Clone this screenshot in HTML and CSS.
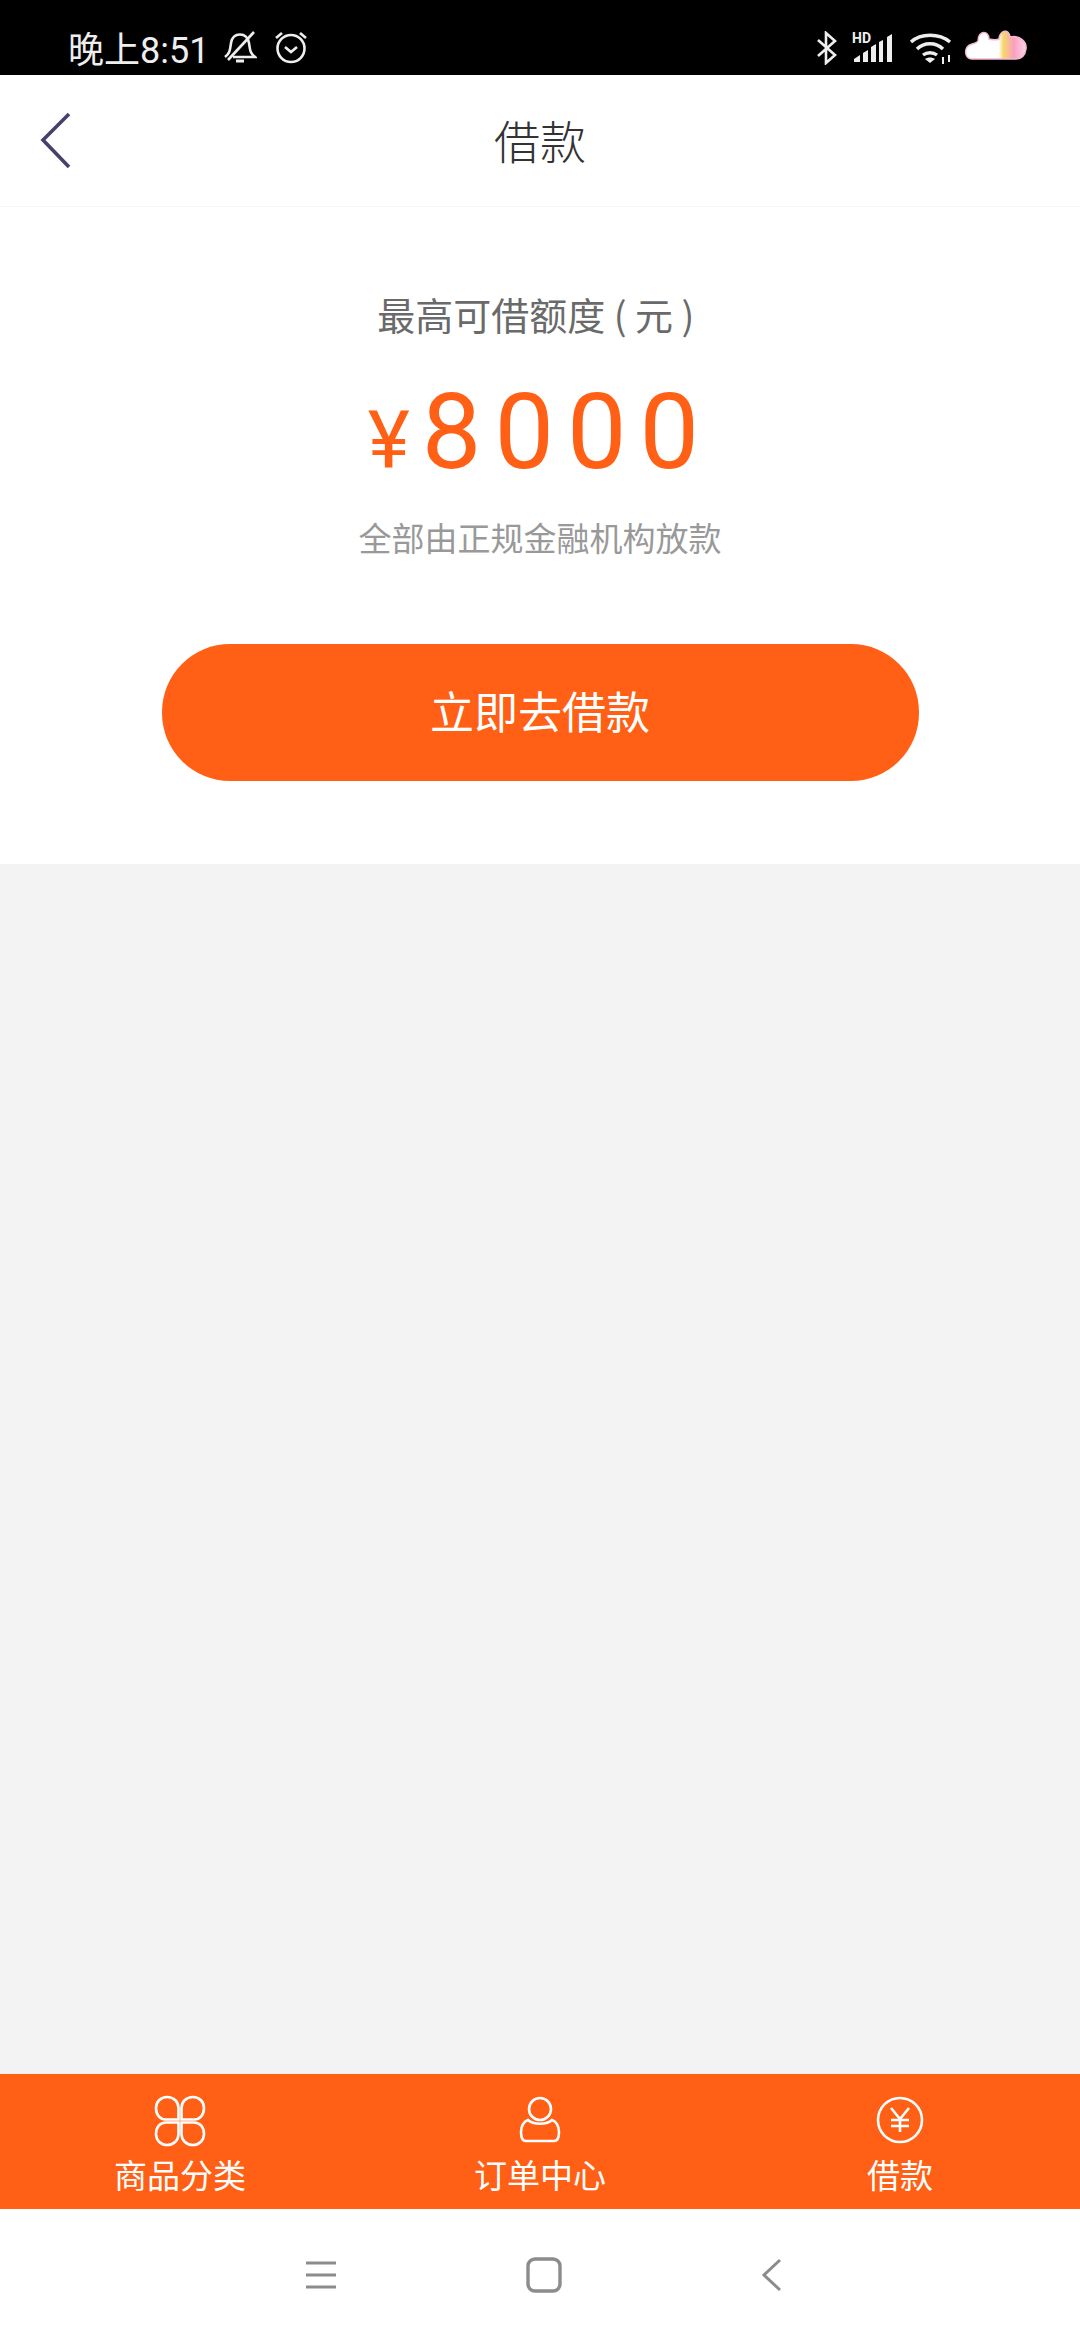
FILE: index.html
```html
<!DOCTYPE html>
<html>
<head>
    <title>借款</title>
    <link rel="stylesheet" href="styles.css">
</head>
<body>
    <div class="phone">
        <!-- Status bar -->
        <div class="status-bar">
            <div class="status-left">
                <span class="status-time">晚上8:51</span>
                <svg class="status-bell" viewBox="0 0 34 34" fill="none" stroke="#eee" stroke-width="2.6">
                    <path d="M2 27 C7 23 7 20 8 13 C9 7 13 4.500 17 4.500 C22 4.500 25 8 26 13 C27 20 27 23 32 27 L10 27"/>
                    <path d="M5 30 L31 2"/>
                    <path d="M13 31 H21" stroke-width="3"/>
                </svg>
                <svg class="status-alarm" viewBox="0 0 34 34" fill="none" stroke="#eee" stroke-width="2.6">
                    <circle cx="17" cy="18.500" r="13.500"/>
                    <path d="M11 17 L17 22 L23 17"/>
                    <path d="M2 8 L8 3"/>
                    <path d="M32 8 L26 3"/>
                </svg>
            </div>
            <div class="status-right">
                <svg class="status-bt" viewBox="0 0 22 34" fill="none" stroke="#eee" stroke-width="2.600">
                    <path d="M2 9 L19 24 L10 32 V2 L19 10 L2 25"/>
                </svg>
                <svg class="status-signal" viewBox="0 0 42 32">
                    <text x="0" y="11" class="status-hd">HD</text>
                    <path fill="#eee" d="M2 27 L8 23 V30 H2Z M11 21 L16 18 V30 H11Z M19 15 L24 12 V30 H19Z M27 10 L31 8 V30 H27Z M35 5 L40 2 V30 H35Z"/>
                </svg>
                <svg class="status-wifi" viewBox="0 0 44 32" fill="none" stroke="#eee" stroke-width="3.400">
                    <path d="M2 10 C12 1 30 1 41 10"/>
                    <path d="M8 17 C15 10 27 10 34 17"/>
                    <path d="M14 23 C18 20 24 20 28 23"/>
                    <path d="M16 27 L21 31 L26 27 C23 25 19 25 16 27Z" fill="#eee" stroke="none"/>
                    <path d="M34 25 V32 M40 23 V30" stroke-width="2"/>
                </svg>
                <svg class="status-cloud" viewBox="0 0 66 34">
                    <defs>
                        <linearGradient id="cloudFill" x1="0" y1="0" x2="1" y2="0">
                            <stop offset="0.55" stop-color="#fff"/>
                            <stop offset="0.62" stop-color="#f7d86a"/>
                            <stop offset="0.8" stop-color="#f8a0c0"/>
                            <stop offset="1" stop-color="#fbd4ea"/>
                        </linearGradient>
                    </defs>
                    <path fill="url(#cloudFill)" stroke="#f6b8d2" stroke-width="1.500" d="M10 32 C2 32 1 19 10 17 C13 16 15 16 16 14 C16 3 27 3 27 12 C31 13 35 13 37 12 C38 3 47 1 48 10 C58 8 65 15 64 22 C63 29 59 32 54 32Z"/>
                </svg>
            </div>
        </div>

        <!-- Title -->
        <header class="title-bar">
            <svg class="back-icon" viewBox="0 0 32 58" fill="none" stroke="#46406f" stroke-width="3.600">
                <path d="M29 2 L3 28 L29 55"/>
            </svg>
            <h1 class="page-title">借款</h1>
        </header>

        <!-- Loan amount -->
        <section class="loan-card">
            <p class="loan-label">最高可借额度 ( 元 ) </p>
            <p class="loan-amount"><span class="loan-currency">¥</span>8000</p>
            <p class="loan-note">全部由正规金融机构放款</p>
            <button class="loan-button">立即去借款</button>
        </section>

        <div class="spacer"></div>

        <!-- Tabs -->
        <nav class="tab-bar">
            <div class="tab-item">
                <svg class="tab-icon" viewBox="0 0 52 52" fill="none" stroke="#fff" stroke-width="2.600">
                    <path d="M24.500 24.500 H12 C6 24.500 2 20 2 13 C2 7 6.500 2 13 2 C20 2 24.500 7 24.500 13Z"/>
                    <path d="M27.500 24.500 H40 C46 24.500 50 20 50 13 C50 7 45.500 2 39 2 C32 2 27.500 7 27.500 13Z"/>
                    <path d="M24.500 27.500 H12 C6 27.500 2 32 2 39 C2 45 6.500 50 13 50 C20 50 24.500 45 24.500 39Z"/>
                    <path d="M27.500 27.500 H40 C46 27.500 50 32 50 39 C50 45 45.500 50 39 50 C32 50 27.500 45 27.500 39Z"/>
                </svg>
                <span class="tab-label">商品分类</span>
            </div>
            <div class="tab-item">
                <svg class="tab-icon" viewBox="0 0 52 52" fill="none" stroke="#fff" stroke-width="2.600">
                    <circle cx="26" cy="14" r="11"/>
                    <path d="M14 25 C19 30 33 30 38 25 C42 26 45 31 45 37 C45 42 44 46 40 46 H12 C8 46 7 42 7 37 C7 31 10 26 14 25Z"/>
                </svg>
                <span class="tab-label">订单中心</span>
            </div>
            <div class="tab-item">
                <svg class="tab-icon" viewBox="0 0 52 52" fill="none" stroke="#fff" stroke-width="2.600">
                    <circle cx="26" cy="25" r="22"/>
                    <path d="M17 13 L26 24 L35 13 M17 25 H35 M17 31 H35 M26 24 V37"/>
                </svg>
                <span class="tab-label">借款</span>
            </div>
        </nav>

        <!-- System navigation -->
        <div class="system-nav">
            <svg class="nav-menu" viewBox="0 0 32 30" fill="none" stroke="#8c8c8c" stroke-width="3">
                <path d="M1 3 H31 M1 15 H31 M1 27 H31"/>
            </svg>
            <svg class="nav-home" viewBox="0 0 36 36" fill="none" stroke="#8c8c8c" stroke-width="3.400">
                <rect x="2" y="2" width="32" height="32" rx="7"/>
            </svg>
            <svg class="nav-back" viewBox="0 0 20 34" fill="none" stroke="#8c8c8c" stroke-width="3">
                <path d="M18 2 L2 17 L18 32"/>
            </svg>
        </div>
    </div>
</body>
</html>
```

FILE: styles.css
```css
* {
    box-sizing: border-box;
}

body {
    margin: 0;
    padding: 0;
    font-family: "Noto Sans CJK SC", "Noto Sans", sans-serif;
    background-color: #f3f3f3;
}

.phone {
    width: 1080px;
    height: 2340px;
    display: flex;
    flex-direction: column;
    overflow: hidden;
}

.status-bar {
    height: 75px;
    background: #000;
    color: #eee;
    display: flex;
    justify-content: space-between;
    align-items: flex-end;
    padding: 0 52px 2px 68px;
}

.status-left,
.status-right {
    display: flex;
    align-items: center;
}

.status-right {
    margin-bottom: 4px;
}

.status-time {
    font-family: Roboto, "Noto Sans CJK SC", sans-serif;
    font-size: 36px;
    line-height: 44px;
}

.status-bell {
    width: 34px;
    height: 34px;
    margin-left: 14px;
    margin-bottom: 8px;
}

.status-alarm {
    width: 34px;
    height: 34px;
    margin-left: 17px;
    margin-bottom: 8px;
}

.status-bt {
    width: 22px;
    height: 34px;
}

.status-signal {
    width: 42px;
    height: 32px;
    margin-left: 14px;
    overflow: visible;
}

.status-hd {
    font-family: Roboto, sans-serif;
    font-size: 14px;
    font-weight: 700;
    fill: #eee;
}

.status-wifi {
    width: 46px;
    height: 32px;
    margin-left: 14px;
}

.status-cloud {
    width: 66px;
    height: 34px;
    margin-left: 8px;
    margin-bottom: 8px;
}

.title-bar {
    height: 132px;
    background: #fff;
    border-bottom: 1px solid #f5f5f5;
    display: flex;
    align-items: center;
    justify-content: center;
    position: relative;
}

.back-icon {
    position: absolute;
    left: 40px;
    top: 37px;
    width: 32px;
    height: 58px;
}

.page-title {
    margin: 0 0 4px;
    font-size: 46px;
    font-weight: 300;
    color: #333;
}

.loan-card {
    height: 657px;
    background: #fff;
    display: flex;
    flex-direction: column;
    align-items: center;
    padding-top: 81px;
}

.loan-card p {
    margin: 0;
}

.loan-label {
    font-size: 38px;
    line-height: 52px;
    color: #6a6a6a;
    white-space: pre;
}

.loan-amount {
    margin-top: 30px !important;
    font-family: Roboto, sans-serif;
    font-size: 106px;
    line-height: 124px;
    letter-spacing: 13px;
    color: #ff6015;
}

.loan-currency {
    font-size: 80px;
    margin-right: 12px;
    letter-spacing: 0;
}

.loan-note {
    margin-top: 11px !important;
    font-size: 33px;
    line-height: 46px;
    color: #999;
}

.loan-button {
    margin-top: 84px;
    width: 757px;
    height: 137px;
    padding: 0 0 6px;
    border: 0;
    border-radius: 68px;
    background-color: #ff6015;
    color: #fff;
    font-family: inherit;
    font-size: 44px;
}

.spacer {
    flex: 1;
}

.tab-bar {
    height: 135px;
    background: #ff6015;
    display: flex;
    align-items: flex-start;
    padding-top: 21px;
}

.tab-item {
    flex: 1;
    display: flex;
    flex-direction: column;
    align-items: center;
}

.tab-icon {
    width: 52px;
    height: 52px;
}

.tab-label {
    font-size: 33px;
    line-height: 46px;
    color: #fff;
    margin-top: 4px;
}

.system-nav {
    height: 131px;
    background: #fff;
    display: flex;
    align-items: center;
    padding-left: 305px;
}

.nav-menu {
    width: 32px;
    height: 30px;
}

.nav-home {
    width: 36px;
    height: 36px;
    margin-left: 189px;
}

.nav-back {
    width: 20px;
    height: 34px;
    margin-left: 200px;
}
```
